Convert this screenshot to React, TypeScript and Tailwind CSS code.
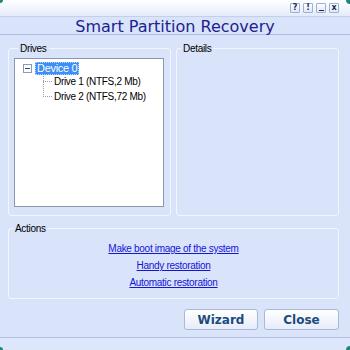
import React from "react";

const tahoma = { fontFamily: '"Liberation Sans", Arial, sans-serif' };

function TitleBtn({ children }: { children: React.ReactNode }) {
  return (
    <div className="w-[10px] h-[10px] border border-[#9fb0d4] bg-gradient-to-b from-white to-[#dfe7f8] rounded-[1px] flex items-center justify-center text-[8px] leading-none font-bold text-[#1d2a55]" style={{ fontFamily: '"DejaVu Sans", sans-serif' }}>
      {children}
    </div>
  );
}

export default function App() {
  return (
    <div className="w-[350px] h-[350px] bg-[#d9e3f9] relative overflow-hidden flex flex-col text-[10px] tracking-[-0.3px] text-black" style={tahoma}>
      {/* top bar */}
      <div className="h-[17px] bg-gradient-to-b from-[#ffffff] to-[#e4ebfb] border-b border-[#c3cfec] flex items-start justify-end pr-[11px] pt-[3px] gap-[3px] tracking-normal">
        <TitleBtn>?</TitleBtn>
        <TitleBtn>!</TitleBtn>
        <TitleBtn><span className="mt-[5px] block w-[5px] h-[1px] bg-[#1d2a55]" /></TitleBtn>
        <TitleBtn>x</TitleBtn>
      </div>
      {/* title */}
      <div className="h-[18px] border-b border-[#aebbe0] flex items-center justify-center tracking-normal">
        <span className="text-[16px] leading-none text-[#1c1f8e] mt-[2px]" style={{ fontFamily: '"DejaVu Sans", Verdana, sans-serif' }}>
          Smart Partition Recovery
        </span>
      </div>
      {/* content */}
      <div className="pl-[8px] pt-[8px] w-[339px]">
        <div className="flex gap-[5px]">
          <fieldset className="w-[163px] h-[173px] border border-[#f3f6ff] rounded-[3px] pl-[5px] pr-[6px] pt-[4px]">
            <legend className="ml-[4px] px-[2px] leading-[11px]">Drives</legend>
            <div className="w-[150px] h-[149px] bg-white border border-[#8d97ab] relative">
              <div className="absolute left-[8px] top-[5px] w-[9px] h-[9px] border border-[#8a9ab8] bg-white flex items-center justify-center">
                <div className="w-[5px] h-[1px] bg-[#33456e]" />
              </div>
              <div className="absolute left-[28px] top-[15px] w-[1px] h-[23px] border-l border-dotted border-[#9aa0aa]" />
              <div className="absolute left-[28px] top-[22px] w-[9px] border-t border-dotted border-[#9aa0aa]" />
              <div className="absolute left-[28px] top-[37px] w-[9px] border-t border-dotted border-[#9aa0aa]" />
              <div className="absolute left-[20px] top-[3px] h-[13px] px-[1px] bg-[#3d8ef5] text-white text-[11px] leading-[11px] border border-dotted border-[#b8d4ff]">Device 0</div>
              <div className="absolute left-[39px] top-[16px] leading-[13px]">Drive 1 (NTFS,2 Mb)</div>
              <div className="absolute left-[39px] top-[31px] leading-[13px]">Drive 2 (NTFS,72 Mb)</div>
            </div>
          </fieldset>
          <fieldset className="w-[163px] h-[173px] border border-[#f3f6ff] rounded-[3px]">
            <legend className="ml-[4px] px-[2px] leading-[11px]">Details</legend>
          </fieldset>
        </div>
        <fieldset className="mt-[7px] w-[331px] h-[76px] border border-[#f3f6ff] rounded-[3px] pt-[6px]">
          <legend className="ml-[4px] px-[2px] leading-[11px]">Actions</legend>
          <div className="flex flex-col items-center">
            <a className="leading-[17px] text-[#1515d8] underline">Make boot image of the system</a>
            <a className="leading-[17px] text-[#1515d8] underline">Handy restoration</a>
            <a className="leading-[17px] text-[#1515d8] underline">Automatic restoration</a>
          </div>
        </fieldset>
        <div className="flex justify-end gap-[6px] mt-[10px] tracking-normal">
          <button className="w-[74px] h-[21px] rounded-[3px] border border-[#a9b8d6] bg-gradient-to-b from-[#ffffff] to-[#e6ecfa] text-[12px] font-bold text-[#1c4b7c]" style={{ fontFamily: '"DejaVu Sans", Verdana, sans-serif' }}>Wizard</button>
          <button className="w-[75px] h-[21px] rounded-[3px] border border-[#a9b8d6] bg-gradient-to-b from-[#ffffff] to-[#e6ecfa] text-[12px] font-bold text-[#1c4b7c]" style={{ fontFamily: '"DejaVu Sans", Verdana, sans-serif' }}>Close</button>
        </div>
      </div>
      <div className="mt-auto h-[13px] border-t border-[#b4c0e0] bg-[#dde6fa]" />
      {/* corners */}
      <div className="absolute left-0 top-0 w-[3px] h-[3px] bg-[#1b8a7a] rounded-br-[3px]" />
      <div className="absolute right-0 top-0 w-[4px] h-[4px] bg-[#1b8a7a] rounded-bl-[4px]" />
      <div className="absolute left-0 bottom-0 w-[3px] h-[3px] bg-[#1b8a7a] rounded-tr-[3px]" />
      <div className="absolute right-0 bottom-0 w-[4px] h-[4px] bg-[#1b8a7a] rounded-tl-[4px]" />
    </div>
  );
}
